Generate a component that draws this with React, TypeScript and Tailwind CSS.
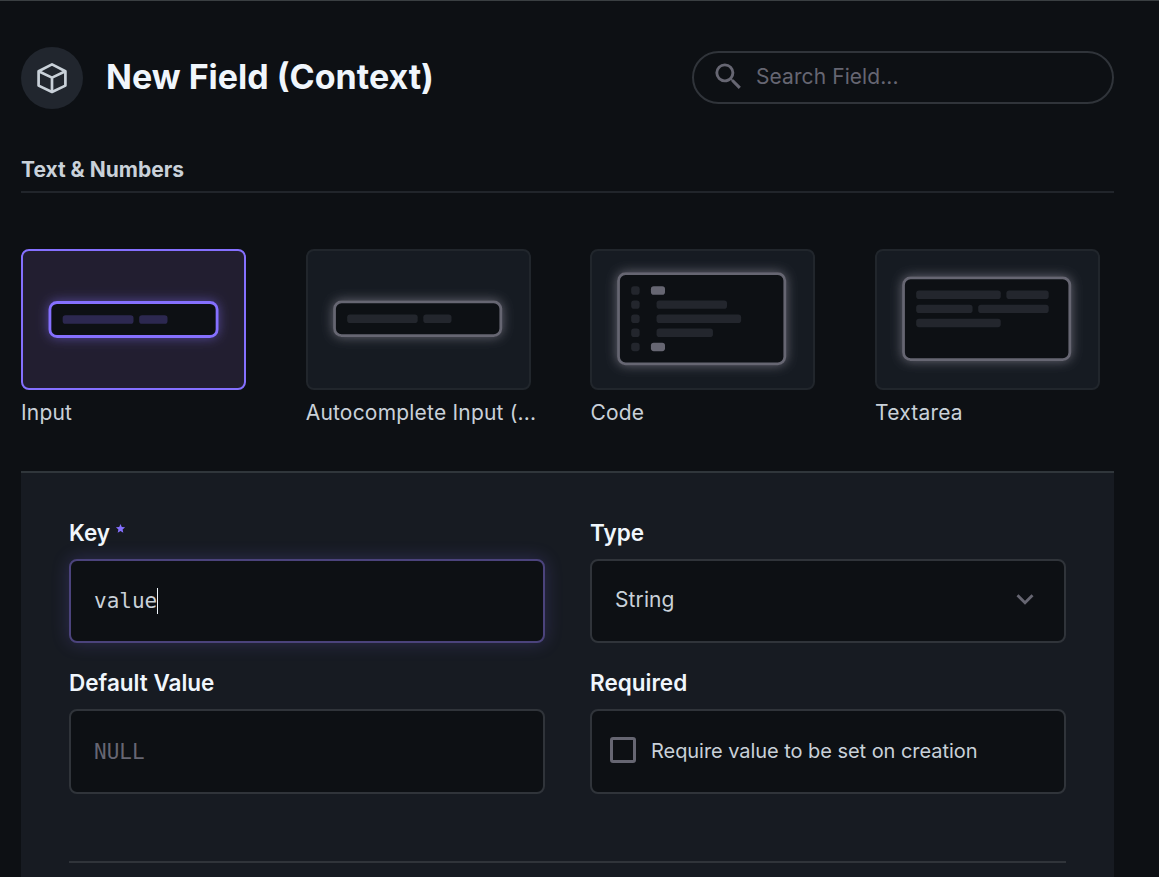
import type { ReactNode } from "react";

type Bar = { x: number; y: number; w: number; strong?: boolean };

type Preview = {
  label: string;
  selected?: boolean;
  box: { y: number; h: number };
  bars: Bar[];
};

const previews: Preview[] = [
  {
    label: "Input",
    selected: true,
    box: { y: 35, h: 26 },
    bars: [
      { x: 28, y: 45, w: 50 },
      { x: 82, y: 45, w: 20 },
    ],
  },
  {
    label: "Autocomplete Input (...",
    box: { y: 35, h: 26 },
    bars: [
      { x: 28, y: 45, w: 50 },
      { x: 82, y: 45, w: 20 },
    ],
  },
  {
    label: "Code",
    box: { y: 15, h: 66 },
    bars: [
      { x: 28, y: 25, w: 6 },
      { x: 28, y: 35, w: 6 },
      { x: 28, y: 45, w: 6 },
      { x: 28, y: 55, w: 6 },
      { x: 28, y: 65, w: 6 },
      { x: 42, y: 25, w: 10, strong: true },
      { x: 46, y: 35, w: 50 },
      { x: 46, y: 45, w: 60 },
      { x: 46, y: 55, w: 40 },
      { x: 42, y: 65, w: 10, strong: true },
    ],
  },
  {
    label: "Textarea",
    box: { y: 18, h: 60 },
    bars: [
      { x: 28, y: 28, w: 60 },
      { x: 92, y: 28, w: 30 },
      { x: 28, y: 38, w: 40 },
      { x: 72, y: 38, w: 50 },
      { x: 28, y: 48, w: 60 },
    ],
  },
];

function PreviewCard({ label, selected, box, bars }: Preview) {
  const line = selected ? "#8570ff" : "#666672";
  const soft = selected ? "#2c2850" : "#23262d";
  const glow = selected ? "glow-primary" : "glow-muted";
  return (
    <div className="w-[230px]">
      <div
        className={
          selected
            ? "h-[141px] w-[225px] overflow-hidden rounded-lg border-2 border-[#8570ff] bg-[#221e30]"
            : "h-[141px] w-[225px] overflow-hidden rounded-lg border-2 border-[#21262c] bg-[#161b22]"
        }
      >
        <svg viewBox="0 0 156 96" className="h-[137px] w-[221px]">
          <defs>
            <filter id={glow} x="-30%" y="-80%" width="160%" height="260%">
              <feDropShadow
                dx="0"
                dy="0"
                stdDeviation="4"
                floodColor={line}
                floodOpacity={selected ? 0.5 : 1}
              />
            </filter>
          </defs>
          <g transform={selected ? "translate(0 0)" : "translate(-0.2 -0.3) scale(0.995)"}>
            <rect x="18" y={box.y} width="120" height={box.h} rx="6" fill="#0d1014" filter={`url(#${glow})`} />
            <rect x="19" y={box.y + 1} width="118" height={box.h - 2} rx="5" fill="#0d1014" stroke={line} strokeWidth="2" />
            {bars.map((b, i) => (
              <rect key={i} x={b.x} y={b.y} width={b.w} height="6" rx="2" fill={b.strong ? line : soft} />
            ))}
          </g>
        </svg>
      </div>
      <div className="mt-2 whitespace-nowrap text-[21px] leading-[30px] tracking-[0.2px] text-[#c9d1d9]">{label}</div>
    </div>
  );
}

function Field({ label, required, children }: { label: string; required?: boolean; children: ReactNode }) {
  return (
    <div>
      <div className="mb-[11px] flex h-[30px] items-center text-[22.5px] font-semibold leading-[30px] text-[#f0f6fc]">
        {label}
        {required && (
          <svg viewBox="0 0 24 24" className="mb-[9px] ml-[5px] size-[11px]" fill="#8570ff">
            <path d="M12 17.27 18.18 21l-1.64-7.03L22 9.24l-7.19-.61L12 2 9.19 8.63 2 9.24l5.46 4.73L5.82 21z" />
          </svg>
        )}
      </div>
      {children}
    </div>
  );
}

export default function App() {
  return (
    <div className="h-[877px] w-[1159px] overflow-hidden border-t border-[#3a3f42] bg-[#0d1014] pl-[21px] pr-[45px] font-['Inter',sans-serif]">
      <header className="mt-[46px] flex h-[62px] items-center">
        <div className="flex size-[62px] items-center justify-center rounded-full bg-[#21262e]">
          <svg viewBox="0 0 30 32" className="h-8 w-[30px]" fill="none" stroke="#c9d1d9" strokeWidth="2.7" strokeLinejoin="round">
            <path d="M15 2.4 28.4 9.2V23.6L15 30 1.6 23.6V9.2Z" />
            <path d="M1.6 9.2 15 15.6 28.4 9.2M15 15.6V30" />
          </svg>
        </div>
        <h1 className="-mt-[2px] ml-[23px] text-[34px] font-bold leading-[44px] text-[#f0f6fc]">New Field (Context)</h1>
        <div className="-mt-px mb-px ml-auto flex h-[53px] w-[422px] items-center rounded-full border-2 border-[#30343a] pl-[17px]">
          <svg viewBox="0 0 24 24" className="-mt-[1px] size-[35px]" fill="#666672">
            <path d="M15.5 14h-.79l-.28-.27A6.471 6.471 0 0 0 16 9.5 6.5 6.5 0 1 0 9.5 16c1.61 0 3.09-.59 4.23-1.57l.27.28v.79l5 4.99L20.49 19l-4.99-5zm-6 0C7.01 14 5 11.99 5 9.5S7.01 5 9.5 5 14 7.01 14 9.5 11.99 14 9.5 14z" />
          </svg>
          <span className="ml-[10px] text-[21px] leading-[30px] tracking-[0.08px] text-[#666672]">Search Field...</span>
        </div>
      </header>

      <h2 className="mt-[46px] h-[38px] border-b-2 border-[#21252b] text-[21px] font-bold leading-[30px] text-[#c9d1d9]">
        Text &amp; Numbers
      </h2>

      <div className="mt-[56px] flex gap-[54.7px]">
        {previews.map((p) => (
          <PreviewCard key={p.label} {...p} />
        ))}
      </div>

      <section className="mt-[43px] h-[440px] border-t-2 border-[#30363b] bg-[#171b22] px-12 pt-[45px]">
        <div className="grid grid-cols-[476px_476px] gap-x-[45px] gap-y-[25px]">
          <Field label="Key" required>
            <div className="flex h-[84px] items-center rounded-lg border-2 border-[#4b437c] bg-[#0d1014] px-[23px] font-['DejaVu_Sans_Mono',monospace] text-[21px] text-[#c9d1d9] shadow-[0_0_18px_0_#8570ff36]">
              <span className="relative top-px">value</span>
              <span className="h-[26px] w-px bg-[#f0f6fc]" />
            </div>
          </Field>
          <Field label="Type">
            <div className="flex h-[84px] items-center justify-between rounded-lg border-2 border-[#30343a] bg-[#0d1014] pl-[23px] pr-[22px] text-[21px] tracking-[0.1px] text-[#c9d1d9]">
              <span className="-mt-[3px]">String</span>
              <svg viewBox="0 0 24 24" className="-mt-[4px] size-[34px]" fill="#666672">
                <path d="M16.59 8.59 12 13.17 7.41 8.59 6 10l6 6 6-6z" />
              </svg>
            </div>
          </Field>
          <Field label="Default Value">
            <div className="flex h-[85px] items-center rounded-lg border-2 border-[#30343a] bg-[#0d1014] px-[23px] font-['DejaVu_Sans_Mono',monospace] text-[21px] text-[#666672]">
              <span className="relative top-px">NULL</span>
            </div>
          </Field>
          <Field label="Required">
            <div className="flex h-[85px] items-center rounded-lg border-2 border-[#30343a] bg-[#0d1014] pl-[18px] text-[20px] tracking-[-0.05px] text-[#c9d1d9]">
              <div className="-mt-[4px] size-[26px] rounded-[3px] border-[3px] border-[#666672]" />
              <span className="-mt-[2px] ml-[15px]">Require value to be set on creation</span>
            </div>
          </Field>
        </div>
        <div className="mt-[67px] h-[2px] w-[997px] bg-[#30343a]" />
      </section>
    </div>
  );
}
